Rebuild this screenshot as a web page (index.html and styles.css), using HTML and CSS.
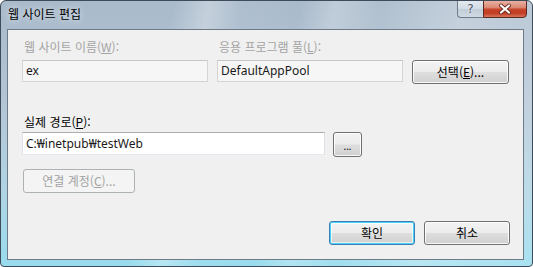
FILE: index.html
```html
<!DOCTYPE html>
<html lang="ko">
<head>
<meta charset="utf-8">
<title>웹 사이트 편집</title>
<link rel="stylesheet" href="styles.css">
</head>
<body>
<div class="window">
  <div class="titlebar">
    <div class="title">웹 사이트 편집</div>
    <div class="caption">
      <div class="cap-help">?</div>
      <div class="cap-close">
        <svg width="16" height="12" viewBox="0 0 16 12">
          <path d="M4 2.5 L12 9.5 M12 2.5 L4 9.5" stroke="#6a2a1e" stroke-width="4" stroke-linecap="round" fill="none"/>
          <path d="M4 2.5 L12 9.5 M12 2.5 L4 9.5" stroke="#ffffff" stroke-width="2.2" stroke-linecap="round" fill="none"/>
        </svg>
      </div>
    </div>
  </div>
  <div class="client">
    <div class="row-top">
      <div class="label disabled">웹 사이트 이름(<u>W</u>):</div>
      <div class="label disabled">응용 프로그램 풀(<u>L</u>):</div>
      <div></div>
      <div class="field field-disabled">ex</div>
      <div class="field field-disabled">DefaultAppPool</div>
      <div class="btn btn-select">선택(<u>E</u>)...</div>
    </div>
    <div class="label label-path">실제 경로(<u>P</u>):</div>
    <div class="row-path">
      <div class="field field-path">C:₩inetpub₩testWeb</div>
      <div class="btn btn-browse">...</div>
    </div>
    <div class="btn btn-account btn-disabled">연결 계정(<u>C</u>)...</div>
    <div class="row-actions">
      <div class="btn btn-action btn-default">확인</div>
      <div class="btn btn-action">취소</div>
    </div>
  </div>
</div>
</body>
</html>
```

FILE: styles.css
```css
* { box-sizing: border-box; }

html, body {
  margin: 0;
  padding: 0;
  background: #ffffff;
}

body {
  font-family: "Noto Sans", "Noto Sans CJK KR", sans-serif;
  font-size: 12px;
  color: #000000;
}

.window {
  width: 533px;
  height: 267px;
  border: 1px solid #3e4b58;
  border-radius: 6px 6px 4px 4px;
  overflow: hidden;
  display: flex;
  flex-direction: column;
  background:
    linear-gradient(100deg,
      rgba(255,255,255,0) 0%,
      rgba(255,255,255,0) 30%,
      rgba(255,255,255,0.3) 36%,
      rgba(255,255,255,0.05) 42%,
      rgba(255,255,255,0) 52%,
      rgba(255,255,255,0.25) 58%,
      rgba(255,255,255,0.08) 66%,
      rgba(255,255,255,0.3) 80%,
      rgba(255,255,255,0.15) 100%),
    linear-gradient(180deg, #a9bacb 0%, #b4c6d6 40%, #b0d4e4 72%, #98dcee 100%);
}

.titlebar {
  height: 28px;
  display: flex;
  align-items: flex-start;
  flex: none;
}

.title {
  margin: 6px 0 0 7px;
  font-family: "Noto Sans CJK KR", sans-serif;
  font-size: 12px;
  line-height: 14px;
  color: #000000;
  text-shadow: 0 0 6px rgba(255,255,255,0.9);
}

.caption {
  margin-left: auto;
  margin-right: 5px;
  margin-top: -1px;
  display: flex;
}

.cap-help {
  width: 26px;
  height: 18px;
  border: 1px solid #6f7d8a;
  border-right: none;
  border-radius: 0 0 0 4px;
  background: linear-gradient(180deg, rgba(255,255,255,0.55) 0%, rgba(225,232,238,0.5) 50%, rgba(190,202,212,0.5) 51%, rgba(215,225,232,0.6) 100%);
  font-family: "DejaVu Sans", sans-serif;
  font-size: 12px;
  line-height: 16px;
  text-align: center;
  color: #4a5560;
  text-shadow: 0 0 2px #ffffff;
}

.cap-close {
  width: 44px;
  height: 18px;
  border: 1px solid #5a2a22;
  border-radius: 0 0 4px 0;
  background: linear-gradient(180deg, #e8b0a2 0%, #dc8a76 40%, #c8462c 52%, #c03c22 75%, #d8745c 100%);
  display: flex;
  align-items: center;
  justify-content: center;
}

.cap-close svg { display: block; }

.client {
  margin: 0 8px 0 6px;
  height: 231px;
  flex: none;
  border: 1px solid #6d7b89;
  background: #f0f0f0;
  padding: 10px 13px 0 14px;
  display: flex;
  flex-direction: column;
  align-items: flex-start;
}

.label {
  font-family: "Noto Sans CJK KR", sans-serif;
  font-size: 12px;
  line-height: 14px;
  padding-left: 2px;
  white-space: nowrap;
}

.disabled { color: #a3a3a3; }

.row-top {
  display: grid;
  grid-template-columns: 186px 186px 97px;
  grid-template-rows: 14px auto;
  column-gap: 9px;
  row-gap: 6px;
  align-items: start;
}

.field {
  height: 22px;
  padding: 0 3px;
  font-size: 12px;
  line-height: 20px;
  white-space: nowrap;
  color: #1a1a1a;
}

.field-disabled {
  background: #f6f6f6;
  border: 1px solid #d4d4d4;
  border-top-color: #c6c6c6;
}

.btn {
  display: flex;
  align-items: center;
  justify-content: center;
  border: 1px solid #707070;
  border-radius: 3px;
  background: linear-gradient(180deg, #f3f3f3 0%, #ececec 48%, #dedede 52%, #d0d0d0 100%);
  box-shadow: inset 0 0 0 1px rgba(255,255,255,0.85);
  font-family: "Noto Sans CJK KR", sans-serif;
  font-size: 12px;
  line-height: 14px;
  color: #000000;
  white-space: nowrap;
}

.btn-select { width: 97px; height: 24px; }

.label-path {
  margin-top: 31px;
  color: #000000;
}

.row-path {
  margin-top: 3px;
  display: flex;
  align-items: flex-start;
  gap: 8px;
}

.field-path {
  width: 303px;
  height: 23px;
  line-height: 21px;
  background: #ffffff;
  border: 1px solid #e3e9ef;
  border-top-color: #abadb3;
  border-left-color: #e2e3ea;
  border-right-color: #dbdfe6;
}

.btn-browse {
  width: 29px;
  height: 25px;
  font-family: "Noto Sans", sans-serif;
  font-size: 10px;
  padding-top: 2px;
}

.btn-account {
  margin-top: 12px;
  margin-left: 1px;
  width: 112px;
  height: 24px;
}

.btn-disabled {
  border-color: #adb2b5;
  background: #f4f4f4;
  box-shadow: none;
  color: #a3a3a3;
}

.row-actions {
  margin-top: 28px;
  align-self: stretch;
  display: flex;
  justify-content: flex-end;
  gap: 9px;
}

.btn-action { width: 86px; height: 24px; }

.btn-default {
  border-color: #3c7fb1;
  box-shadow: inset 0 0 0 1px #48d1fa, inset 0 0 0 2px rgba(255,255,255,0.6);
}
```
